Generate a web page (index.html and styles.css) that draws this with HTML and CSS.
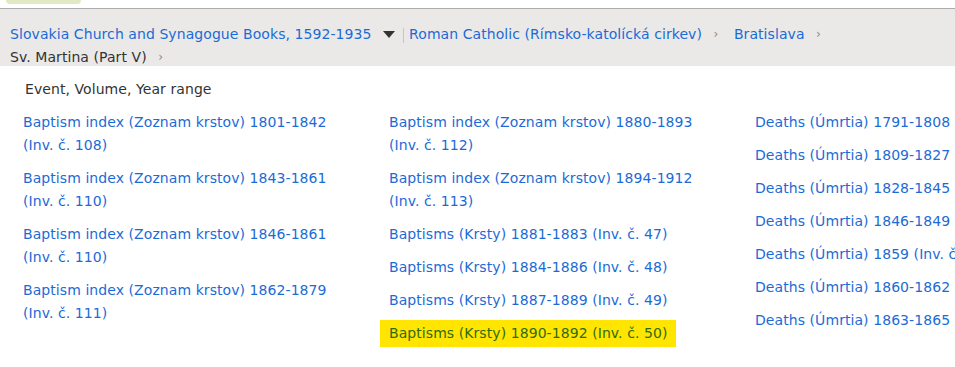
FILE: index.html
```html
<!DOCTYPE html>
<html lang="en">
<head>
<meta charset="utf-8">
<title>Slovakia Church and Synagogue Books</title>
<link rel="stylesheet" href="styles.css">
</head>
<body>
<div class="topbar"><span class="pill"></span></div>
<nav class="crumbs">
  <a class="crumb" href="#">Slovakia Church and Synagogue Books, 1592-1935</a>
  <span class="caret"></span>
  <span class="sep"></span>
  <a class="crumb" href="#">Roman Catholic (Rímsko-katolícká cirkev)</a>
  <span class="chev">›</span>
  <a class="crumb" href="#">Bratislava</a>
  <span class="chev">›</span>
  <span class="current">Sv. Martina (Part V)</span>
  <span class="chev">›</span>
</nav>
<div class="content">
  <div class="heading">Event, Volume, Year range</div>
  <div class="grid">
    <ul class="col">
      <li><a class="item" href="#">Baptism index (Zoznam krstov) 1801-1842 (Inv. č. 108)</a></li>
      <li><a class="item" href="#">Baptism index (Zoznam krstov) 1843-1861 (Inv. č. 110)</a></li>
      <li><a class="item" href="#">Baptism index (Zoznam krstov) 1846-1861 (Inv. č. 110)</a></li>
      <li><a class="item" href="#">Baptism index (Zoznam krstov) 1862-1879 (Inv. č. 111)</a></li>
    </ul>
    <ul class="col">
      <li><a class="item" href="#">Baptism index (Zoznam krstov) 1880-1893 (Inv. č. 112)</a></li>
      <li><a class="item" href="#">Baptism index (Zoznam krstov) 1894-1912 (Inv. č. 113)</a></li>
      <li><a class="item" href="#">Baptisms (Krsty) 1881-1883 (Inv. č. 47)</a></li>
      <li><a class="item" href="#">Baptisms (Krsty) 1884-1886 (Inv. č. 48)</a></li>
      <li><a class="item" href="#">Baptisms (Krsty) 1887-1889 (Inv. č. 49)</a></li>
      <li><a class="item selected" href="#">Baptisms (Krsty) 1890-1892 (Inv. č. 50)</a></li>
    </ul>
    <ul class="col">
      <li><a class="item" href="#">Deaths (Úmrtia) 1791-1808 (Inv. č. 51)</a></li>
      <li><a class="item" href="#">Deaths (Úmrtia) 1809-1827 (Inv. č. 52)</a></li>
      <li><a class="item" href="#">Deaths (Úmrtia) 1828-1845 (Inv. č. 53)</a></li>
      <li><a class="item" href="#">Deaths (Úmrtia) 1846-1849 (Inv. č. 54)</a></li>
      <li><a class="item" href="#">Deaths (Úmrtia) 1859 (Inv. č. 55)</a></li>
      <li><a class="item" href="#">Deaths (Úmrtia) 1860-1862 (Inv. č. 56)</a></li>
      <li><a class="item" href="#">Deaths (Úmrtia) 1863-1865 (Inv. č. 57)</a></li>
    </ul>
  </div>
</div>
</body>
</html>
```

FILE: styles.css
```css
html, body {
  margin: 0;
  padding: 0;
  overflow: hidden;
  background: #fff;
}
body {
  font-family: "DejaVu Sans", Verdana, sans-serif;
  font-size: 14px;
  letter-spacing: 0.07px;
  color: #333;
  width: 955px;
  height: 367px;
}
a { text-decoration: none; }

.topbar {
  height: 8px;
  padding-left: 6px;
}
.pill {
  display: block;
  width: 75px;
  height: 4px;
  background: #dfe9c3;
  border-radius: 0 0 4px 4px;
}

.crumbs {
  border-top: 1px solid #adadad;
  background: #ebe9e7;
  height: 58px;
  box-sizing: border-box;
  padding: 14px 10px 0 10px;
  line-height: 23px;
  overflow: hidden;
}
.crumb {
  color: #1b6bd6;
}
.current {
  color: #333;
  white-space: nowrap;
}
.chev {
  display: inline-block;
  color: #8a8a8a;
  font-size: 12px;
  margin: 0 11px 0 7px;
  vertical-align: top;
}
.caret {
  display: inline-block;
  width: 0;
  height: 0;
  border-left: 6px solid transparent;
  border-right: 6px solid transparent;
  border-top: 7px solid #333;
  margin: 0 3px 1px 7px;
  vertical-align: middle;
}
.sep {
  display: inline-block;
  width: 1px;
  height: 15px;
  background: #c8c6c4;
  margin-right: 1px;
  vertical-align: middle;
}

.content {
  padding: 12px 0 0 14px;
}
.heading {
  line-height: 22px;
  padding-left: 11px;
  color: #333;
}
.grid {
  display: grid;
  grid-template-columns: 366px 366px 366px;
  margin-top: 9px;
}
.col {
  list-style: none;
  margin: 0;
  padding: 0;
  display: flex;
  flex-direction: column;
  gap: 6px;
}
.item {
  display: inline-block;
  max-width: 335px;
  padding: 2px 9px;
  line-height: 23px;
  color: #1b6bd6;
  white-space: normal;
}
.col:last-child .item {
  max-width: none;
  white-space: nowrap;
}
.item.selected {
  background: #ffe500;
  color: #2f6b12;
}
```
